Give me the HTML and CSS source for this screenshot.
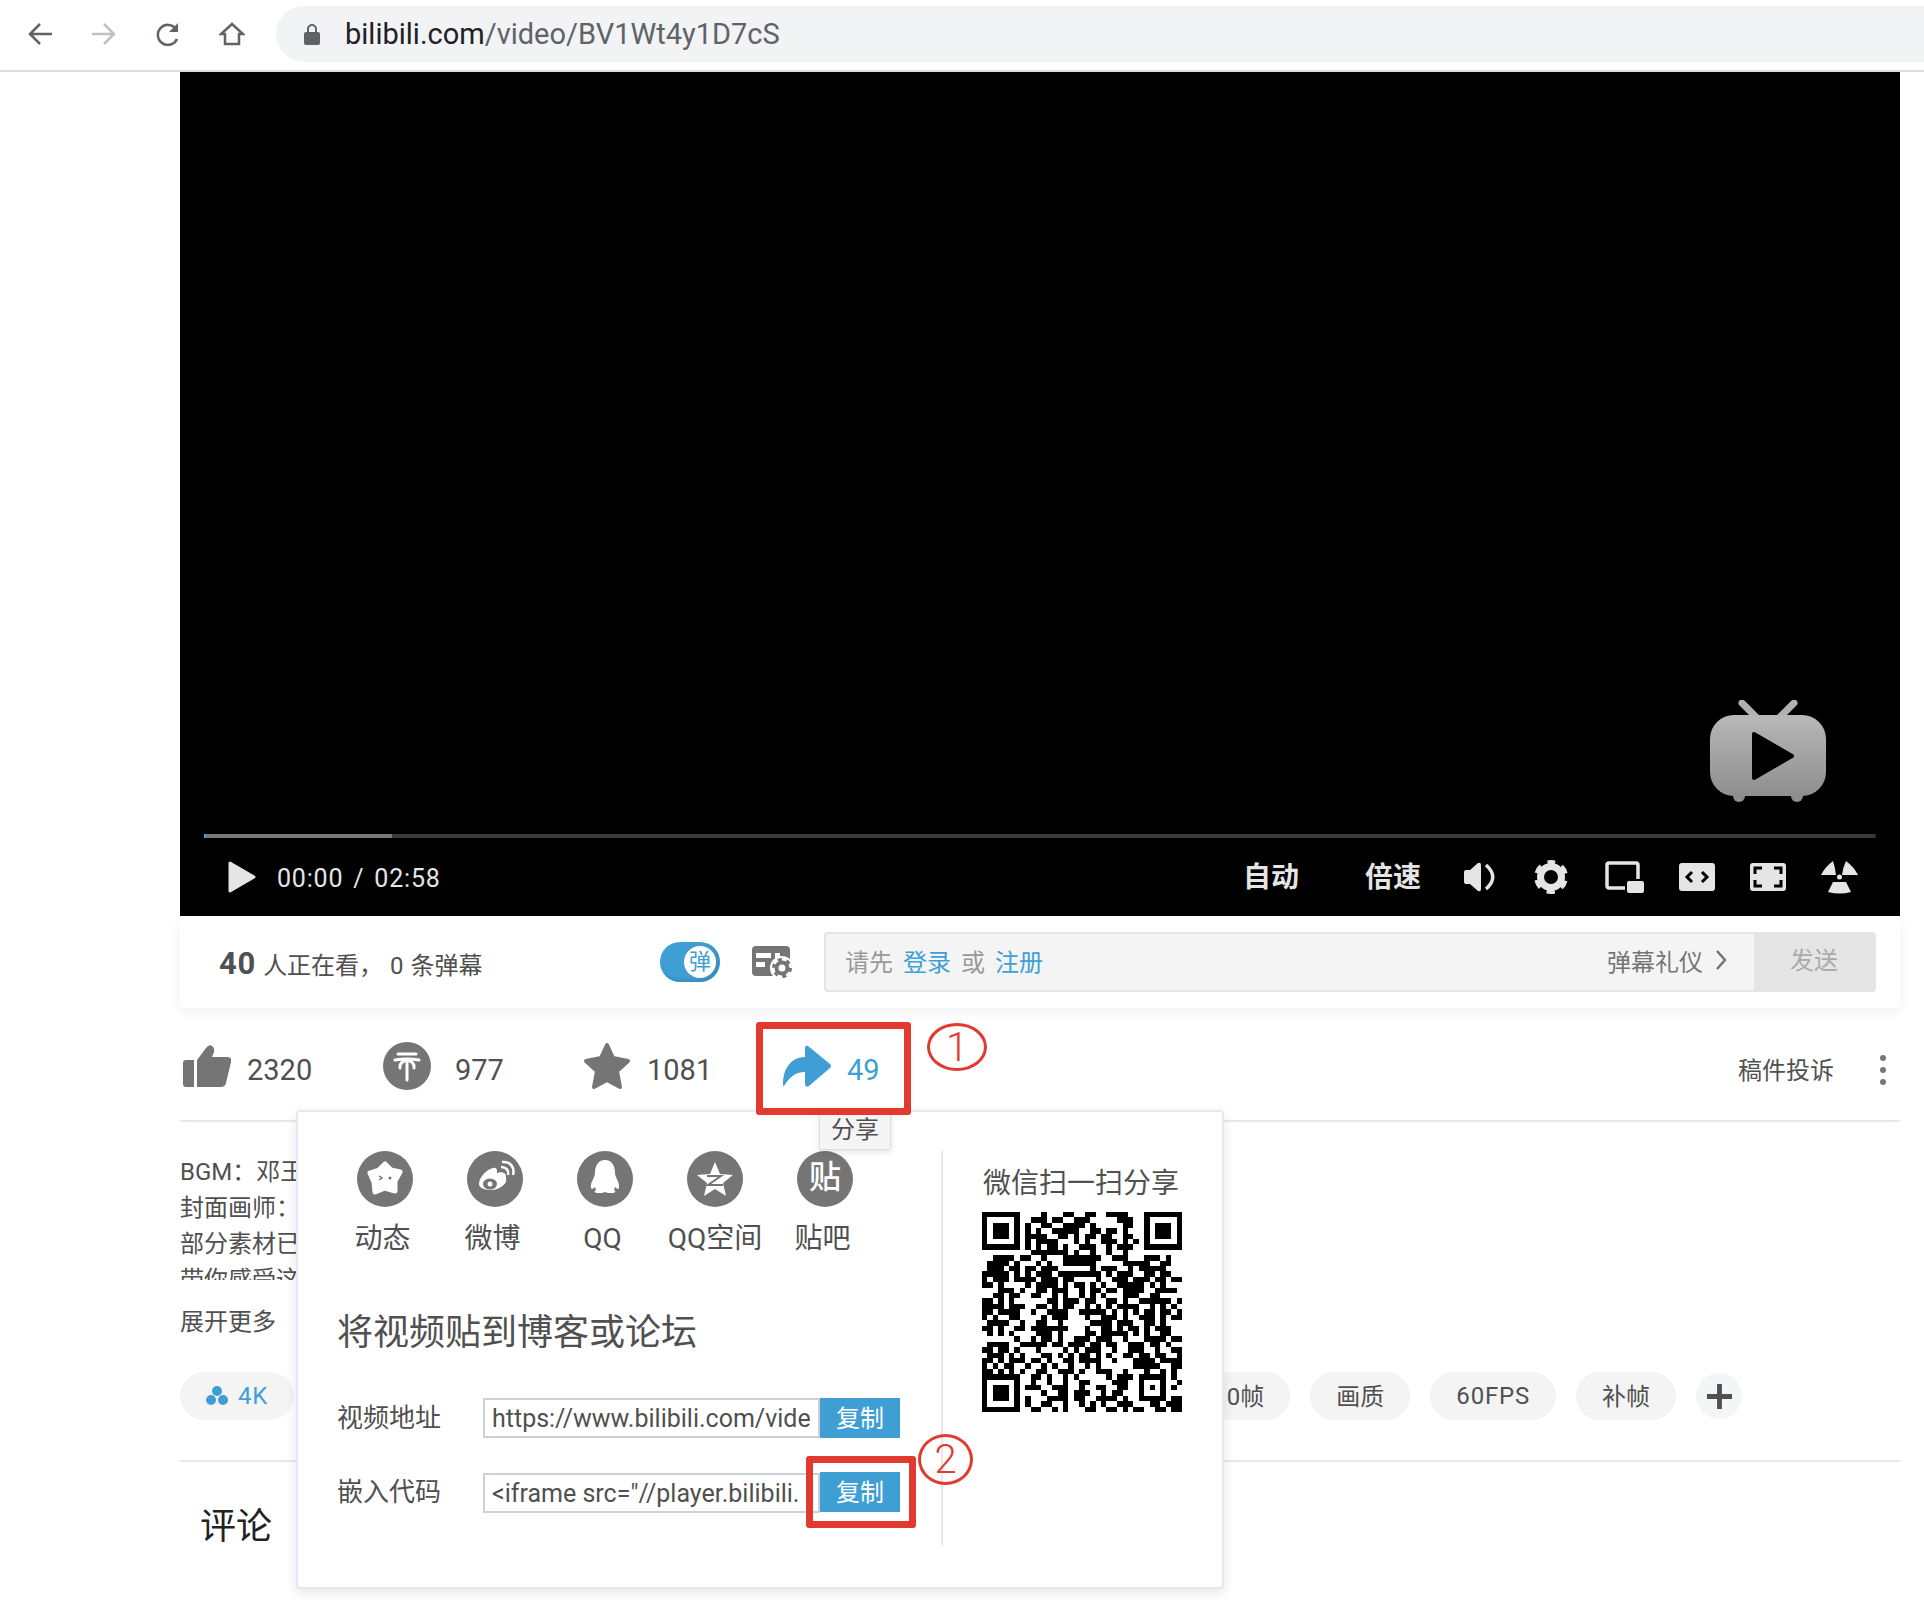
FILE: index.html
```html
<!DOCTYPE html>
<html lang="zh-CN">
<head>
    <meta charset="UTF-8">
    <meta name="viewport" content="width=device-width, initial-scale=1.0">
    <title>bilibili video share</title>
    <link rel="stylesheet" href="styles.css">
</head>
<body>

<header class="toolbar">
    <svg class="nav-icon" viewBox="0 0 26 24"><path d="M25 12H3M13 2 3 12l10 10"/></svg>
    <svg class="nav-icon nav-off" viewBox="0 0 26 24"><path d="M1 12h22M13 2l10 10-10 10"/></svg>
    <svg class="nav-icon" viewBox="0 0 26 24"><path d="M22 17a10 10 0 1 1-1-10"/><path class="solid" d="M23 1v9h-9z"/></svg>
    <svg class="nav-icon" viewBox="0 0 26 24"><path d="M13 2 2 12h4v10h14V12h4z"/></svg>
    <div class="address">
        <svg class="lock" viewBox="0 0 16 22"><path d="M4 10V6a4 4 0 0 1 8 0v4" fill="none" stroke="#5f6368" stroke-width="2"/><rect y="9" width="16" height="13" rx="2" fill="#5f6368"/></svg>
        <span class="host">bilibili.com</span><span class="path">/video/BV1Wt4y1D7cS</span>
    </div>
</header>

<main class="page">
    <section class="player">
        <svg class="tv" viewBox="0 0 116 102">
            <defs><linearGradient id="tvFill" x1="0" y1="0" x2="0" y2="1"><stop offset="0" stop-color="#b8b8b8"/><stop offset="1" stop-color="#8e8e8e"/></linearGradient></defs>
            <path d="M32 3l17 17M84 3 67 20" stroke="#b0b0b0" stroke-width="7" stroke-linecap="round"/>
            <circle cx="29" cy="96" r="6" fill="#8e8e8e"/><circle cx="87" cy="96" r="6" fill="#8e8e8e"/>
            <rect y="15" width="116" height="81" rx="24" fill="url(#tvFill)"/>
            <path d="M44 34 82 56 44 78z" fill="#000" stroke="#000" stroke-width="4" stroke-linejoin="round"/>
        </svg>
        <div class="progress"><div class="progress-fill"></div></div>
        <div class="controls">
            <svg class="play" viewBox="0 0 28 32"><path d="M2 2 26 16 2 30z" fill="#e5e5e5" stroke="#e5e5e5" stroke-width="3" stroke-linejoin="round"/></svg>
            <span class="time">00:00 / 02:58</span>
            <div class="control-right">
                <span class="control-text">自动</span>
                <span class="control-text control-speed">倍速</span>
                <svg class="speaker" viewBox="0 0 33 30"><path d="M0 10q0-2 2-2h4l8-7q3-1 3 2v24q0 3-3 2l-8-7H2q-2 0-2-2z" fill="#e5e5e5"/><path d="M22 3c9 8 9 16 0 24" fill="none" stroke="#e5e5e5" stroke-width="3.500"/></svg>
                <svg class="gear" viewBox="0 0 38 34"><circle cx="19" cy="17" r="10.500" fill="none" stroke="#e5e5e5" stroke-width="7"/><circle cx="19" cy="17" r="14.500" fill="none" stroke="#e5e5e5" stroke-width="5" stroke-dasharray="8 7.180" stroke-dashoffset="4" transform="rotate(-90 19 17)"/></svg>
                <svg class="pip" viewBox="0 0 39 32"><path d="M20 27H4a2 2 0 0 1-2-2V4a2 2 0 0 1 2-2h27a2 2 0 0 1 2 2v14" fill="none" stroke="#e5e5e5" stroke-width="3.500"/><rect x="22" y="20" width="17" height="12" rx="2" fill="#e5e5e5"/></svg>
                <svg class="screen" viewBox="0 0 36 28"><rect width="36" height="28" rx="3" fill="#e5e5e5"/><path d="M13 9l-5 5 5 5M23 9l5 5-5 5" fill="none" stroke="#000" stroke-width="3"/></svg>
                <svg class="screen" viewBox="0 0 36 28"><rect width="36" height="28" rx="3" fill="#e5e5e5"/><path d="M5 11V5h7M31 11V5h-7M5 17v6h7M31 17v6h-7" fill="none" stroke="#000" stroke-width="3"/></svg>
                <svg class="nuke" viewBox="0 0 37 34"><g fill="#e5e5e5"><path d="M12 1Q4 7 0 15h15Q14 7 12 1zM25 1q-3 6-4 14h16Q33 7 25 1zM12 22h13l5 10q-11 3-23 0z"/><circle cx="18.500" cy="17" r="2.500"/></g></svg>
            </div>
        </div>
    </section>

    <section class="danmaku-bar">
        <div class="stats"><b>40</b> 人正在看，&nbsp;0 条弹幕</div>
        <div class="toggle"><span class="knob">弹</span></div>
        <svg class="dm-settings" viewBox="0 0 42 33">
            <rect width="38" height="30" rx="4" fill="#757575"/>
            <path d="M4 7h15v5H4zM4 16h9v5H4zM23 7h5v5h-5z" fill="#fff"/>
            <circle cx="30" cy="22" r="12" fill="#fff"/>
            <circle cx="30" cy="22" r="5.500" fill="none" stroke="#757575" stroke-width="4"/>
            <circle cx="30" cy="22" r="8.500" fill="none" stroke="#757575" stroke-width="3" stroke-dasharray="4 4.900"/>
        </svg>
        <div class="dm-input">
            <div class="dm-hint">请先<a>登录</a>或<a>注册</a></div>
            <div class="dm-rule">弹幕礼仪<svg viewBox="0 0 12 22"><path d="M2 2l8 9-8 9" fill="none" stroke="#757575" stroke-width="2.500"/></svg></div>
            <div class="dm-send">发送</div>
        </div>
    </section>

    <section class="actions">
        <div class="action">
            <svg class="action-icon" viewBox="0 0 48 42"><path d="M0 18q0-3 3-3h8v27H3q-3 0-3-3zM14 15l9-12q3-4 6-2t2 6l-2 5h15q5 0 4 5l-5 21q-1 4-5 4H14z" fill="#757575"/></svg>
            <span>2320</span>
        </div>
        <div class="action action-coin">
            <svg class="action-icon" viewBox="0 0 48 48"><circle cx="24" cy="24" r="24" fill="#757575"/><path d="M15 12h18M12 18q12-2 24 0M17 26q-1-6 7-8 8 2 7 8M24 18v20" fill="none" stroke="#fff" stroke-width="3" stroke-linecap="round"/></svg>
            <span>977</span>
        </div>
        <div class="action">
            <svg class="action-icon" viewBox="0 0 48 48"><path d="M24 3l6 13 15 3-11 10 3 16-13-7-13 7 3-16L3 19l15-3z" fill="#757575" stroke="#757575" stroke-width="4" stroke-linejoin="round"/></svg>
            <span>1081</span>
        </div>
        <div class="action action-share">
            <svg class="action-icon" viewBox="0 0 48 42"><path d="M22 3q0-3 3-2l22 18q2 2 0 4L26 41q-4 2-4-2V27C12 27 6 33 1 41q-1 1-1-2C0 24 8 12 22 12z" fill="#3f9fd5"/></svg>
            <span>49</span>
        </div>
        <a class="report">稿件投诉</a>
        <div class="more"><i></i><i></i><i></i></div>
    </section>

    <section class="desc">
        BGM：邓王<br>
        封面画师：<br>
        部分素材已<br>
        带你感受这
    </section>
    <a class="expand">展开更多</a>

    <section class="tags">
        <span class="tag tag-first">
            <svg viewBox="0 0 22 20"><g fill="#3f9fd5"><circle cx="11" cy="5" r="5"/><circle cx="5" cy="14" r="5"/><circle cx="17" cy="14" r="5"/></g></svg>4K
        </span>
        <span class="tag tag-cn tag-push">0帧</span>
        <span class="tag tag-cn">画质</span>
        <span class="tag">60FPS</span>
        <span class="tag tag-cn">补帧</span>
        <span class="tag-add"><svg viewBox="0 0 26 26"><path d="M13 0v26M0 13h26" stroke="#505050" stroke-width="5"/></svg></span>
    </section>

    <h2 class="comment-title">评论</h2>
</main>

<!-- share popover -->
<div class="popover">
    <div class="share-left">
        <div class="share-grid">
            <div class="share-item">
                <svg class="share-icon" viewBox="0 0 56 56"><circle cx="28" cy="28" r="28" fill="#757575"/><path d="M28 13l6 6 9 2-5 9v10l-10-3-10 4-1-10-4-9 9-3z" fill="#fff" stroke="#fff" stroke-width="5" stroke-linejoin="round"/><path d="M22 25l3 2-3 2" fill="none" stroke="#757575" stroke-width="1.500"/><circle cx="33" cy="27" r="1.500" fill="#757575"/></svg>
                <span>动态</span>
            </div>
            <div class="share-item">
                <svg class="share-icon" viewBox="0 0 56 56"><circle cx="28" cy="28" r="28" fill="#757575"/><path d="M12 33c0-7 8-15 14-16 5-1 4 4 4 5 5-2 10 0 9 5 2 6-7 12-15 12-6 0-12-2-12-6z" fill="#fff"/><ellipse cx="23" cy="33" rx="7" ry="5.500" fill="#757575"/><circle cx="23" cy="33" r="2.500" fill="#fff"/><path d="M34 16c5 0 8 3 7 8M35 11c8-1 13 5 11 13" fill="none" stroke="#fff" stroke-width="2.500"/></svg>
                <span>微博</span>
            </div>
            <div class="share-item">
                <svg class="share-icon" viewBox="0 0 56 56"><circle cx="28" cy="28" r="28" fill="#757575"/><path d="M28 9c-7 0-10 6-10 13 0 5-5 9-4 15 1 2 3 0 4-1l1 3c-2 1-2 3 2 3h4l3-1 3 1h4c4 0 4-2 2-3l1-3c1 1 3 3 4 1 1-6-4-10-4-15 0-7-3-13-10-13z" fill="#fff"/></svg>
                <span>QQ</span>
            </div>
            <div class="share-item share-item-wide">
                <svg class="share-icon" viewBox="0 0 56 56"><circle cx="28" cy="28" r="28" fill="#757575"/><path d="M28 11l5 12 13 1-10 8 3 13-11-7-11 7 3-13-10-8 13-1z" fill="#fff"/><path d="M20 25h14l-13 9h15" fill="none" stroke="#757575" stroke-width="2"/></svg>
                <span>QQ空间</span>
            </div>
            <div class="share-item">
                <div class="share-icon share-glyph">贴</div>
                <span>贴吧</span>
            </div>
        </div>
        <h3 class="share-title">将视频贴到博客或论坛</h3>
        <div class="copy-row">
            <label>视频地址</label>
            <input class="copy-input" type="text" readonly value="https://www.bilibili.com/video/BV1Wt4y1D7cS">
            <button class="copy-btn" type="button">复制</button>
        </div>
        <div class="copy-row copy-row-embed">
            <label>嵌入代码</label>
            <input class="copy-input" type="text" readonly value="&lt;iframe src=&quot;//player.bilibili.">
            <button class="copy-btn" type="button">复制</button>
        </div>
    </div>
    <div class="share-right">
        <div class="qr-title">微信扫一扫分享</div>
        <svg class="qr" viewBox="0 0 37 37" shape-rendering="crispEdges"><path stroke="#000" stroke-width="1" d="M0 .5h7M11 .5h1M15 .5h2M19 .5h2M23 .5h4M30 .5h7M0 1.500h1M6 1.500h1M9 1.500h3M13 1.500h2M17 1.500h3M25 1.500h3M30 1.500h1M36 1.500h1M0 2.500h1M2 2.500h3M6 2.500h1M8 2.500h1M11 2.500h2M15 2.500h4M20 2.500h1M26 2.500h2M30 2.500h1M32 2.500h3M36 2.500h1M0 3.500h1M2 3.500h3M6 3.500h1M8 3.500h1M10 3.500h1M13 3.500h5M20 3.500h2M23 3.500h2M26 3.500h1M30 3.500h1M32 3.500h3M36 3.500h1M0 4.500h1M2 4.500h3M6 4.500h1M8 4.500h4M14 4.500h2M17 4.500h1M19 4.500h2M22 4.500h2M26 4.500h2M30 4.500h1M32 4.500h3M36 4.500h1M0 5.500h1M6 5.500h1M8 5.500h1M10 5.500h4M17 5.500h1M19 5.500h1M22 5.500h3M26 5.500h1M28 5.500h1M30 5.500h1M36 5.500h1M0 6.500h7M8 6.500h1M10 6.500h1M12 6.500h2M15 6.500h1M18 6.500h3M23 6.500h1M25 6.500h3M30 6.500h7M9 7.500h7M17 7.500h1M20 7.500h1M23 7.500h1M26 7.500h1M2 8.500h4M7 8.500h2M11 8.500h1M15 8.500h7M24 8.500h3M30 8.500h3M34 8.500h1M1 9.500h4M6 9.500h1M10 9.500h1M12 9.500h1M15 9.500h6M26 9.500h5M33 9.500h2M1 10.500h3M5 10.500h2M8 10.500h2M11 10.500h3M20 10.500h1M22 10.500h3M27 10.500h1M29 10.500h5M0 11.500h5M6 11.500h1M8 11.500h1M10 11.500h3M14 11.500h8M23 11.500h1M25 11.500h3M30 11.500h2M33 11.500h2M0 12.500h1M2 12.500h3M6 12.500h4M11 12.500h3M15 12.500h2M21 12.500h1M24 12.500h3M28 12.500h3M32 12.500h2M35 12.500h2M0 13.500h2M3 13.500h1M8 13.500h1M10 13.500h4M15 13.500h1M17 13.500h2M20 13.500h1M22 13.500h1M25 13.500h5M31 13.500h1M33 13.500h1M3 14.500h3M7 14.500h1M10 14.500h2M13 14.500h3M18 14.500h1M20 14.500h2M23 14.500h2M26 14.500h4M32 14.500h4M2 15.500h2M5 15.500h2M9 15.500h2M13 15.500h1M15 15.500h1M18 15.500h1M20 15.500h1M22 15.500h1M26 15.500h3M31 15.500h2M0 16.500h2M3 16.500h1M5 16.500h1M12 16.500h2M15 16.500h3M19 16.500h2M23 16.500h2M26 16.500h1M29 16.500h6M36 16.500h1M0 17.500h4M5 17.500h3M10 17.500h2M13 17.500h1M15 17.500h2M19 17.500h1M21 17.500h1M23 17.500h1M25 17.500h4M31 17.500h1M33 17.500h1M35 17.500h1M0 18.500h2M3 18.500h4M9 18.500h1M12 18.500h4M18 18.500h3M21 18.500h2M24 18.500h1M26 18.500h1M28 18.500h1M30 18.500h2M33 18.500h2M36 18.500h1M0 19.500h1M2 19.500h1M5 19.500h2M11 19.500h1M13 19.500h3M19 19.500h1M22 19.500h3M26 19.500h1M29 19.500h3M33 19.500h1M35 19.500h2M1 20.500h4M7 20.500h1M10 20.500h2M14 20.500h1M20 20.500h3M23 20.500h1M25 20.500h3M30 20.500h2M33 20.500h1M0 21.500h2M3 21.500h1M6 21.500h2M9 21.500h7M19 21.500h1M22 21.500h2M25 21.500h1M27 21.500h2M30 21.500h1M32 21.500h3M1 22.500h1M3 22.500h1M5 22.500h1M10 22.500h3M14 22.500h1M19 22.500h2M22 22.500h5M28 22.500h1M30 22.500h1M33 22.500h2M6 23.500h1M9 23.500h1M11 23.500h2M14 23.500h1M17 23.500h3M21 23.500h3M26 23.500h1M30 23.500h3M33 23.500h1M35 23.500h2M1 24.500h2M3 24.500h2M7 24.500h5M13 24.500h2M16 24.500h3M20 24.500h2M23 24.500h2M27 24.500h2M29 24.500h1M31 24.500h2M34 24.500h1M0 25.500h2M3 25.500h2M6 25.500h1M10 25.500h1M15 25.500h1M17 25.500h1M19 25.500h3M24 25.500h1M27 25.500h3M32 25.500h1M35 25.500h2M1 26.500h3M5 26.500h1M7 26.500h1M11 26.500h2M14 26.500h1M16 26.500h1M18 26.500h2M21 26.500h1M23 26.500h1M26 26.500h2M29 26.500h2M32 26.500h2M36 26.500h1M0 27.500h2M3 27.500h1M5 27.500h3M9 27.500h2M12 27.500h1M15 27.500h2M18 27.500h4M24 27.500h1M28 27.500h4M33 27.500h4M0 28.500h1M2 28.500h1M4 28.500h2M8 28.500h1M11 28.500h1M13 28.500h1M16 28.500h1M19 28.500h1M21 28.500h1M28 28.500h5M35 28.500h2M0 29.500h2M3 29.500h1M5 29.500h1M7 29.500h1M10 29.500h2M14 29.500h3M18 29.500h1M21 29.500h2M23 29.500h1M26 29.500h1M30 29.500h1M33 29.500h1M35 29.500h1M0 30.500h7M9 30.500h2M12 30.500h1M15 30.500h1M17 30.500h1M23 30.500h1M25 30.500h3M29 30.500h5M35 30.500h1M0 31.500h1M6 31.500h1M9 31.500h1M12 31.500h1M15 31.500h1M18 31.500h2M24 31.500h3M29 31.500h1M33 31.500h1M36 31.500h1M0 32.500h1M2 32.500h3M6 32.500h1M8 32.500h3M13 32.500h3M18 32.500h1M21 32.500h2M25 32.500h2M29 32.500h1M31 32.500h1M33 32.500h1M35 32.500h1M0 33.500h1M2 33.500h3M6 33.500h1M11 33.500h1M14 33.500h2M17 33.500h3M22 33.500h1M24 33.500h2M29 33.500h1M33 33.500h1M0 34.500h1M2 34.500h3M6 34.500h1M8 34.500h1M12 34.500h4M17 34.500h2M21 34.500h4M26 34.500h1M29 34.500h5M35 34.500h2M0 35.500h1M6 35.500h1M8 35.500h1M11 35.500h2M15 35.500h1M18 35.500h1M20 35.500h1M22 35.500h1M25 35.500h3M31 35.500h2M34 35.500h3M0 36.500h7M9 36.500h2M13 36.500h1M15 36.500h1M19 36.500h2M23 36.500h2M26 36.500h1M28 36.500h2M32 36.500h2M35 36.500h2"/></svg>
    </div>
</div>

<div class="tooltip">分享</div>

<!-- red annotations on top of the screenshot -->
<div class="mark mark-share"></div>
<div class="mark mark-copy"></div>
<div class="badge badge-one">1</div>
<div class="badge badge-two">2</div>

</body>
</html>
```

FILE: styles.css
```css
* {
    box-sizing: border-box;
}

body {
    margin: 0;
    width: 1924px;
    height: 1610px;
    overflow: hidden;
    position: relative;
    background-color: #fff;
    color: #505050;
    font-family: Roboto, "Noto Sans CJK SC", sans-serif;
    font-size: 24px;
}

/* browser bar */
.toolbar {
    height: 72px;
    padding: 0 0 2px 27px;
    display: flex;
    align-items: center;
    gap: 38px;
    border-bottom: 2px solid #dadce0;
}

.nav-icon {
    width: 26px;
    height: 24px;
    flex: none;
    fill: none;
    stroke: #5f6368;
    stroke-width: 2.5;
}

.nav-off {
    stroke: #bdc1c6;
}

.nav-icon .solid {
    fill: #5f6368;
    stroke: none;
}

.address {
    flex: 1;
    height: 56px;
    margin-left: -7px;
    padding-left: 28px;
    display: flex;
    align-items: center;
    background-color: #f1f3f4;
    border-radius: 28px 0 0 28px;
    font-size: 29px;
}

.lock {
    width: 16px;
    height: 22px;
    margin-right: 25px;
}

.host {
    color: #202124;
}

.path {
    color: #5f6368;
}

/* page */
.page {
    margin-left: 180px;
    width: 1720px;
}

.player {
    position: relative;
    height: 844px;
    background-color: #000;
    display: flex;
    flex-direction: column;
    justify-content: flex-end;
}

.tv {
    position: absolute;
    right: 74px;
    bottom: 114px;
    width: 116px;
    height: 102px;
}

.progress {
    height: 4px;
    margin: 0 24px;
    background-color: #3a3a3a;
    border-radius: 2px;
}

.progress-fill {
    width: 188px;
    height: 100%;
    background-color: #777;
    border-left: 2px solid #3f9fd5;
}

.controls {
    height: 78px;
    padding: 0 42px 0 48px;
    display: flex;
    align-items: center;
    color: #e5e5e5;
}

.play {
    width: 28px;
    height: 32px;
    margin-right: 21px;
}

.time {
    padding-top: 2px;
    font-size: 25px;
    letter-spacing: 0.8px;
    word-spacing: 3px;
}

.control-right {
    margin-left: auto;
    display: flex;
    align-items: center;
    gap: 35px;
}

.control-text {
    margin-right: 31px;
    margin-bottom: 5px;
    font-size: 28px;
    font-weight: 700;
}

.control-speed {
    margin-right: 8px;
}

.speaker {
    width: 33px;
    height: 30px;
}

.gear {
    width: 38px;
    height: 34px;
}

.pip {
    width: 39px;
    height: 32px;
}

.screen {
    width: 36px;
    height: 28px;
}

.nuke {
    width: 37px;
    height: 34px;
}

/* danmaku bar */
.danmaku-bar {
    height: 92px;
    padding: 0 24px 0 39px;
    display: flex;
    align-items: center;
    box-shadow: 0 4px 12px rgba(0, 0, 0, 0.06);
}

.stats {
    padding-top: 3px;
    word-spacing: 1px;
}

.stats b {
    font-size: 31px;
    letter-spacing: 0.8px;
}

.toggle {
    width: 60px;
    height: 40px;
    margin-left: auto;
    padding-right: 4px;
    display: flex;
    align-items: center;
    justify-content: flex-end;
    background-color: #3f9fd5;
    border-radius: 20px;
    box-shadow: inset -3px -3px 4px rgba(0, 0, 0, 0.12);
}

.knob {
    width: 32px;
    height: 32px;
    line-height: 32px;
    text-align: center;
    background-color: #fff;
    border-radius: 50%;
    color: #3f9fd5;
    font-size: 22px;
}

.dm-settings {
    width: 42px;
    height: 33px;
    margin: 0 30px 0 32px;
}

.dm-input {
    width: 1052px;
    height: 60px;
    display: flex;
    align-items: center;
    background-color: #f4f4f4;
    border: 2px solid #e5e5e5;
    border-radius: 4px;
}

.dm-hint {
    padding-left: 19px;
    margin-bottom: 4px;
    color: #999;
}

.dm-hint a {
    margin: 0 10px;
    color: #3f9fd5;
}

.dm-rule {
    margin-left: auto;
    margin-bottom: 4px;
    padding-right: 27px;
    display: flex;
    align-items: center;
    gap: 12px;
    color: #757575;
}

.dm-rule svg {
    width: 12px;
    height: 22px;
}

.dm-send {
    width: 120px;
    height: 100%;
    line-height: 54px;
    text-align: center;
    background-color: #e5e5e5;
    color: #aaa;
}

/* like, coin, favourite, share */
.actions {
    height: 114px;
    padding: 12px 14px 0 3px;
    display: flex;
    align-items: center;
    border-bottom: 2px solid #e5e9ef;
    font-size: 29px;
}

.action {
    width: 200px;
    display: flex;
    align-items: center;
    gap: 16px;
}

.action-coin {
    gap: 24px;
}

.action-share {
    color: #3f9fd5;
}

.action-icon {
    width: 48px;
    height: 48px;
    flex: none;
    margin-bottom: 8px;
}

.report {
    margin-left: auto;
    margin-bottom: 4px;
    font-size: 24px;
}

.more {
    margin-left: 46px;
    display: flex;
    flex-direction: column;
    gap: 6px;
}

.more i {
    width: 6px;
    height: 6px;
    background-color: #757575;
    border-radius: 50%;
}

/* text below */
.desc {
    height: 126px;
    margin-top: 32px;
    overflow: hidden;
    line-height: 36px;
}

.expand {
    display: block;
    margin-top: 24px;
    line-height: 36px;
}

.tags {
    margin-top: 32px;
    padding-right: 158px;
    padding-bottom: 40px;
    display: flex;
    align-items: center;
    gap: 20px;
    border-bottom: 2px solid #e5e9ef;
}

.tag {
    height: 48px;
    padding: 0 26px;
    display: flex;
    align-items: center;
    background-color: #f4f4f4;
    border-radius: 24px;
    letter-spacing: 0.8px;
}

.tag-cn {
    padding-bottom: 4px;
    letter-spacing: 0;
}

.tag-first {
    gap: 10px;
    color: #3f9fd5;
}

.tag-first svg {
    width: 22px;
    height: 20px;
}

.tag-push {
    margin-left: auto;
}

.tag-add {
    width: 46px;
    height: 46px;
    display: flex;
    align-items: center;
    justify-content: center;
    background-color: #f4f5f7;
    border-radius: 50%;
}

.tag-add svg {
    width: 25px;
    height: 25px;
}

.comment-title {
    margin: 40px 0 0 20px;
    font-size: 36px;
    font-weight: 400;
    line-height: 50px;
    color: #222;
}

/* share popover */
.popover {
    position: absolute;
    left: 296px;
    top: 1110px;
    width: 928px;
    height: 479px;
    display: flex;
    background-color: #fff;
    border: 2px solid #e5e9ef;
    border-radius: 4px;
    box-shadow: 0 4px 12px rgba(0, 0, 0, 0.1);
}

.share-left {
    width: 645px;
    height: 394px;
    margin-top: 39px;
    padding-left: 39px;
    border-right: 2px solid #e5e9ef;
}

.share-grid {
    margin-left: -7px;
    display: flex;
}

.share-item {
    width: 110px;
    display: flex;
    flex-direction: column;
    align-items: center;
    gap: 14px;
    font-size: 28px;
    line-height: 36px;
    white-space: nowrap;
}

.share-item span {
    margin-right: 5px;
}

.share-item-wide span {
    margin-right: 0;
}

.share-icon {
    width: 56px;
    height: 56px;
}

.share-glyph {
    line-height: 52px;
    text-align: center;
    background-color: #757575;
    border-radius: 50%;
    color: #fff;
    font-size: 32px;
    font-weight: 500;
}

.share-title {
    margin: 51px 0 0;
    font-size: 36px;
    font-weight: 400;
    line-height: 50px;
}

.copy-row {
    margin-top: 34px;
    display: flex;
    align-items: center;
    height: 40px;
}

.share-title + .copy-row {
    margin-top: 40px;
}

.copy-row label {
    width: 146px;
    margin-bottom: 5px;
    font-size: 26px;
}

.copy-input {
    width: 337px;
    height: 40px;
    padding: 0 8px 0 7px;
    border: 2px solid #ccd0d7;
    outline: none;
    color: #505050;
    font-family: inherit;
    font-size: 25px;
}

.copy-row-embed .copy-input {
    margin-top: 2px;
}

.copy-btn {
    width: 80px;
    height: 40px;
    padding: 0 0 4px;
    border: none;
    background-color: #3f9fd5;
    color: #fff;
    font-family: inherit;
    font-size: 24px;
}

.share-right {
    padding-left: 39px;
}

.qr-title {
    margin: 52px 0 0 1px;
    font-size: 28px;
    line-height: 40px;
}

.qr {
    display: block;
    width: 200px;
    height: 200px;
    margin-top: 8px;
}

.tooltip {
    position: absolute;
    left: 819px;
    top: 1110px;
    width: 72px;
    height: 40px;
    padding-top: 1px;
    line-height: 36px;
    text-align: center;
    background-color: #f5f5f5;
    border: 1px solid #ddd;
    border-radius: 2px;
    box-shadow: 0 2px 6px rgba(0, 0, 0, 0.12);
}

/* annotations */
.mark {
    position: absolute;
    border: 7px solid #e33a2f;
    border-radius: 3px;
}

.mark-share {
    left: 756px;
    top: 1022px;
    width: 155px;
    height: 93px;
}

.mark-copy {
    left: 806px;
    top: 1456px;
    width: 110px;
    height: 72px;
}

.badge {
    position: absolute;
    display: flex;
    align-items: center;
    justify-content: center;
    border: 3px solid #e33a2f;
    border-radius: 50%;
    color: #e33a2f;
    font-size: 40px;
    font-weight: 300;
}

.badge-one {
    left: 927px;
    top: 1023px;
    width: 60px;
    height: 48px;
}

.badge-two {
    left: 918px;
    top: 1434px;
    width: 55px;
    height: 51px;
}
```
